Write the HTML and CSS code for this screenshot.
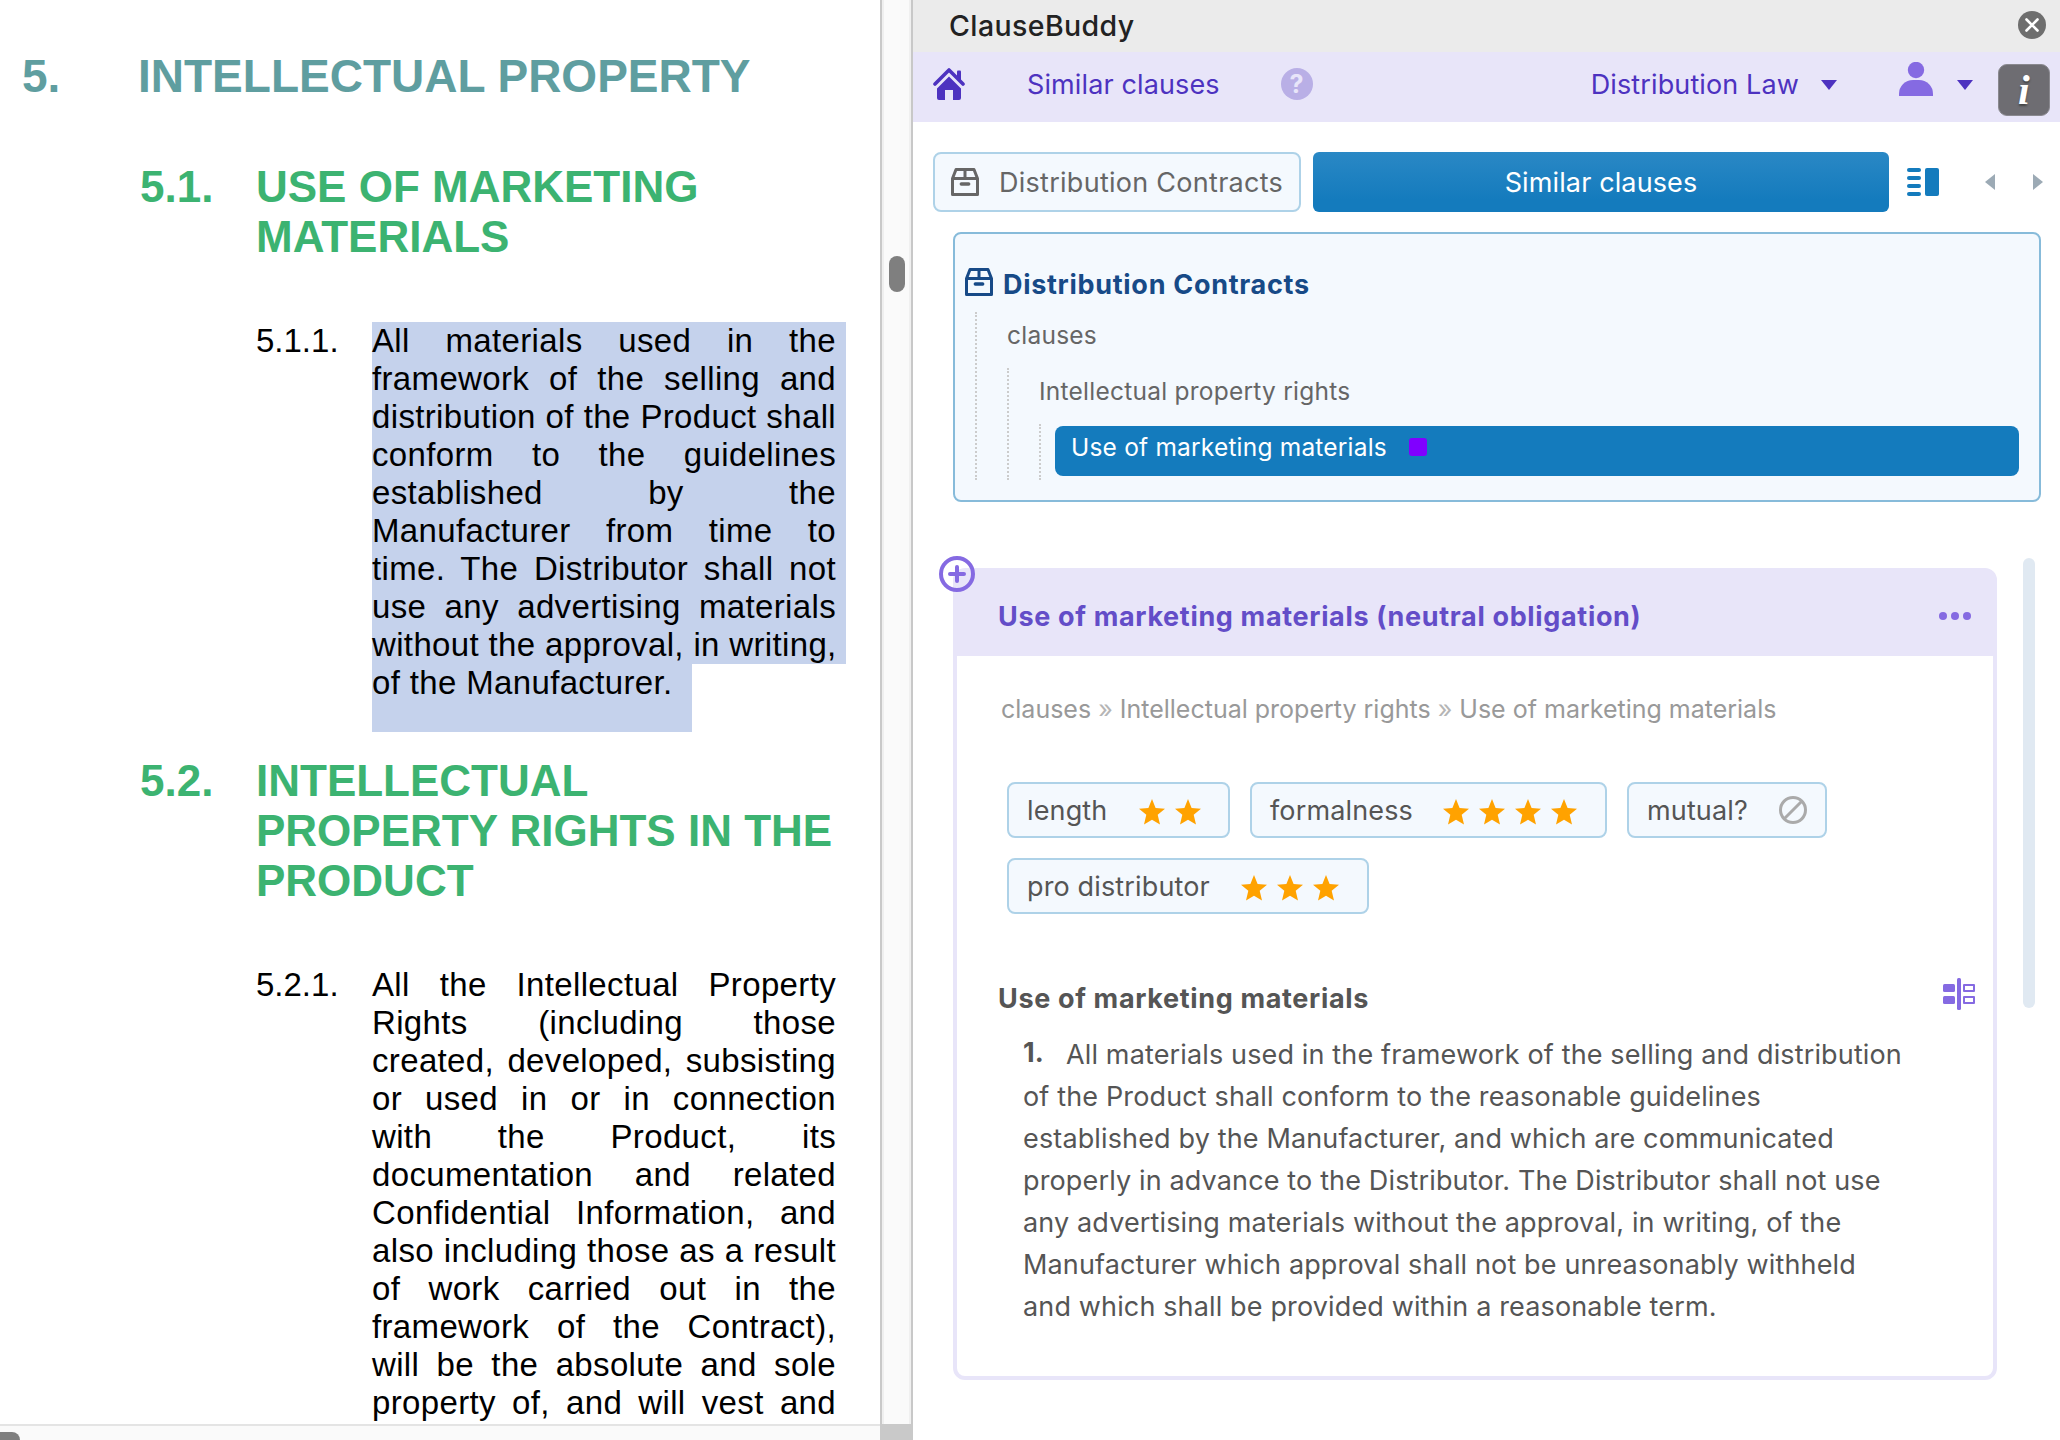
FILE: index.html
```html
<!DOCTYPE html>
<html lang="en">
<head>
    <meta charset="UTF-8">
    <title>ClauseBuddy</title>
    <link rel="stylesheet" href="styles.css">
</head>
<body>
    <!-- Document -->
    <div class="document">
        <div class="page">
            <h1 class="row title"><span class="num">5.</span><span>INTELLECTUAL PROPERTY</span></h1>

            <h2 class="row heading"><span class="num">5.1.</span><span>USE OF MARKETING<br>MATERIALS</span></h2>
            <div class="row clause">
                <span class="num">5.1.1.</span>
                <div class="clause-text">
                    <p class="selected">All materials used in the<br>framework of the selling and<br>distribution of the Product shall<br>conform to the guidelines<br>established by the<br>Manufacturer from time to<br>time. The Distributor shall not<br>use any advertising materials<br>without the approval, in writing,</p>
                    <p class="selected-end">of the Manufacturer.</p>
                </div>
            </div>

            <h2 class="row heading heading-second"><span class="num">5.2.</span><span>INTELLECTUAL<br>PROPERTY RIGHTS IN THE<br>PRODUCT</span></h2>
            <div class="row clause">
                <span class="num">5.2.1.</span>
                <div class="clause-text">
                    <p class="justified">All the Intellectual Property<br>Rights (including those<br>created, developed, subsisting<br>or used in or in connection<br>with the Product, its<br>documentation and related<br>Confidential Information, and<br>also including those as a result<br>of work carried out in the<br>framework of the Contract),<br>will be the absolute and sole<br>property of, and will vest and</p>
                </div>
            </div>
        </div>
        <div class="scroll-y"><div class="thumb"></div></div>
        <div class="scroll-x"><div class="thumb"></div></div>
        <div class="corner"></div>
    </div>

    <!-- Task pane -->
    <div class="pane">
        <div class="titlebar">
            <span class="app-name">ClauseBuddy</span>
            <svg width="28" height="28" viewBox="0 0 28 28"><circle cx="14" cy="14" r="14" fill="#6e6e6e"/><path d="M8.500 8.500l11 11M19.500 8.500l-11 11" stroke="#fff" stroke-width="2.600" stroke-linecap="round"/></svg>
        </div>

        <div class="navbar">
            <svg class="home" width="32" height="32" viewBox="0 0 32 32" fill="#4d32c0"><path d="M24 3.500a1 1 0 0 1 1-1h2a1 1 0 0 1 1 1V13l-4-4z"/><path d="M2 16L16 2l14 14" fill="none" stroke="#4d32c0" stroke-width="3.600" stroke-linecap="round" stroke-linejoin="round"/><path d="M16 8.500l12 12V30a2 2 0 0 1-2 2h-6V22h-8v10H6a2 2 0 0 1-2-2v-9.500z"/></svg>
            <span class="nav-title">Similar clauses</span>
            <span class="help">?</span>
            <span class="nav-library">Distribution Law</span>
            <svg class="caret-1" width="16" height="10" viewBox="0 0 16 10"><path d="M0 0h16L8 10z" fill="#4d32c0"/></svg>
            <svg class="user" width="34" height="34" viewBox="0 0 34 34" fill="#856ae2"><circle cx="17" cy="8" r="8.200"/><path d="M0 34v-2a14 14 0 0 1 14-14h6a14 14 0 0 1 14 14v2z"/></svg>
            <svg class="caret-2" width="16" height="10" viewBox="0 0 16 10"><path d="M0 0h16L8 10z" fill="#4d32c0"/></svg>
            <span class="info">i</span>
        </div>

        <div class="tabs">
            <div class="tab">
                <svg width="28" height="28" viewBox="0 0 28 28" fill="none" stroke="#666" stroke-width="3" stroke-linejoin="round"><path d="M1.500 10.500L5 1.500h18l3.500 9v16h-25zM1.500 10.500h25M14 1.500v9"/><path d="M10.300 16h7.400" stroke-width="3.400" stroke-linecap="round"/></svg>
                <span class="tab-label">Distribution Contracts</span>
            </div>
            <div class="tab tab-active"><span>Similar clauses</span></div>
            <svg class="compare" width="32" height="28" viewBox="0 0 32 28" fill="#147bbd"><rect width="14" height="4" rx="2"/><rect y="8" width="14" height="4" rx="2"/><rect y="16" width="14" height="4" rx="2"/><rect y="24" width="14" height="4" rx="2"/><rect x="18" width="14" height="28" rx="2"/></svg>
            <svg class="prev" width="10" height="16" viewBox="0 0 10 16"><path d="M10 0v16L0 8z" fill="#9caab5"/></svg>
            <svg class="next" width="10" height="16" viewBox="0 0 10 16"><path d="M0 0v16l10-8z" fill="#9caab5"/></svg>
        </div>

        <!-- Clause library tree -->
        <div class="tree">
            <div class="tree-title">
                <svg width="28" height="28" viewBox="0 0 28 28" fill="none" stroke="#174a87" stroke-width="3" stroke-linejoin="round"><path d="M1.500 10.500L5 1.500h18l3.500 9v16h-25zM1.500 10.500h25M14 1.500v9"/><path d="M10.300 16h7.400" stroke-width="3.400" stroke-linecap="round"/></svg>
                <span>Distribution Contracts</span>
            </div>
            <div class="branch branch-1">
                <div class="node">clauses</div>
                <div class="branch">
                    <div class="node">Intellectual property rights</div>
                    <div class="branch branch-last">
                        <div class="node-active"><span>Use of marketing materials</span><i class="marker"></i></div>
                    </div>
                </div>
            </div>
        </div>

        <div class="results">
            <div class="card">
                <svg class="add" width="36" height="36" viewBox="0 0 36 36" fill="none" stroke="#856ae2" stroke-width="4"><circle cx="18" cy="18" r="16"/><path d="M18 11v14M11 18h14" stroke-linecap="round"/></svg>
                <div class="card-header">
                    <span>Use of marketing materials (neutral obligation)</span>
                    <svg width="32" height="8" viewBox="0 0 32 8" fill="#856ae2"><circle cx="4" cy="4" r="4"/><circle cx="16" cy="4" r="4"/><circle cx="28" cy="4" r="4"/></svg>
                </div>
                <div class="card-body">
                    <div class="crumbs">clauses <i>»</i> Intellectual property rights <i>»</i> Use of marketing materials</div>
                    <div class="chips">
                        <div class="chip chip-length"><span>length</span><div class="stars"><svg><use href="#star"/></svg><svg><use href="#star"/></svg></div></div>
                        <div class="chip chip-formal"><span>formalness</span><div class="stars"><svg><use href="#star"/></svg><svg><use href="#star"/></svg><svg><use href="#star"/></svg><svg><use href="#star"/></svg></div></div>
                        <div class="chip chip-mutual"><span>mutual?</span><svg class="ban" width="28" height="28" viewBox="0 0 28 28" fill="none" stroke="#aaa" stroke-width="3"><circle cx="14" cy="14" r="12.500"/><path d="M5.500 22.500l17-17"/></svg></div>
                        <div class="chip chip-pro"><span>pro distributor</span><div class="stars"><svg><use href="#star"/></svg><svg><use href="#star"/></svg><svg><use href="#star"/></svg></div></div>
                    </div>
                    <div class="clause-head">
                        <span>Use of marketing materials</span>
                        <svg width="32" height="32" viewBox="0 0 32 32" fill="#856ae2"><rect y="6" width="12" height="8" rx="1.500"/><rect y="18" width="12" height="8" rx="1.500"/><rect x="14" width="4" height="32" rx="1.500"/><path d="M21 7h10v6H21zM21 19h10v6H21z" fill="none" stroke="#856ae2" stroke-width="2" stroke-linejoin="round"/></svg>
                    </div>
                    <p class="clause-body"><b>1.</b>All materials used in the framework of the selling and distribution<br>of the Product shall conform to the reasonable guidelines<br>established by the Manufacturer, and which are communicated<br>properly in advance to the Distributor. The Distributor shall not use<br>any advertising materials without the approval, in writing, of the<br>Manufacturer which approval shall not be unreasonably withheld<br>and which shall be provided within a reasonable term.</p>
                </div>
            </div>
            <div class="results-scroll"></div>
        </div>
    </div>

    <svg class="symbols" width="0" height="0"><symbol id="star" viewBox="0 0 26 26"><path d="M13 0l3.600 9 9.400.7-7.300 6.100 2.300 9.700L13 20.800 5 25.500l2.300-9.700L0 9.700 9.400 9z" fill="#ffa200"/></symbol></svg>
</body>
</html>
```
FILE: styles.css
```css
* {
    margin: 0;
    padding: 0;
    box-sizing: border-box;
}

body {
    display: flex;
    width: 2060px;
    height: 1440px;
    overflow: hidden;
    background: #fff;
    font-family: Inter, "Liberation Sans", sans-serif;
    color: #555;
}

svg {
    display: block;
    flex: none;
}

.symbols {
    position: absolute;
}

/* Document */
.document {
    display: grid;
    grid-template-columns: 880px 33px;
    grid-template-rows: 1424px 16px;
    width: 913px;
    flex: none;
    font-family: "Liberation Sans", Arial, sans-serif;
}

.page {
    overflow: hidden;
    padding-top: 50px;
    color: #000;
}

.row {
    display: flex;
    white-space: nowrap;
}

.row .num {
    flex: none;
    width: 116px;
}

.title {
    padding-left: 22px;
    font-size: 46px;
    line-height: 52px;
    color: #5f9ea0;
}

.heading {
    padding: 60px 0 60px 140px;
    font-size: 44px;
    line-height: 50px;
    color: #3cb371;
}

.heading-second {
    padding: 24px 0 60px 140px;
}

.clause {
    padding-left: 256px;
    font-size: 33px;
    line-height: 38px;
}

.clause-text {
    letter-spacing: 0.35px;
}

.selected,
.justified {
    width: 464px;
    text-align: justify;
    text-align-last: justify;
}

.selected {
    width: 474px;
    padding-right: 10px;
    background: #c5d2ec;
}

.selected-end {
    width: 320px;
    height: 68px;
    background: #c5d2ec;
}

.scroll-y {
    padding: 256px 0 0 7px;
    background: #fafafa;
    border-left: 2px solid #c9c9c9;
    border-right: 2px solid #c8c8c8;
    box-shadow: inset 2px 0 #efefef, inset -2px 0 #f0f0f0;
}

.scroll-y .thumb {
    width: 16px;
    height: 36px;
    border-radius: 8px;
    background: #7f7f7f;
}

.scroll-x {
    padding-top: 6px;
    background: #fafafa;
    border-top: 2px solid #e4e4e4;
}

.scroll-x .thumb {
    width: 20px;
    height: 8px;
    border-top-right-radius: 8px;
    background: #7f7f7f;
}

.corner {
    background: #c9c9c9;
}

/* Task pane */
.pane {
    width: 1147px;
    flex: none;
}

.titlebar {
    display: flex;
    justify-content: space-between;
    height: 52px;
    padding: 11px 14px 0 36px;
    background: #ebebeb;
}

.app-name {
    font-size: 28.5px;
    font-weight: 500;
    line-height: 30px;
    letter-spacing: 0.4px;
    color: #222;
}

.navbar {
    display: flex;
    align-items: center;
    height: 70px;
    padding: 0 10px 6px 20px;
    background: #e8e5f9;
    font-size: 27px;
    line-height: 34px;
    letter-spacing: 0.12px;
    color: #4d32c0;
    white-space: nowrap;
}

.nav-title {
    margin: 2px 0 0 62px;
}

.help {
    width: 32px;
    height: 32px;
    margin-left: 61px;
    border-radius: 50%;
    background: #b9afe6;
    color: #e8e5f9;
    font-size: 25px;
    font-weight: 700;
    line-height: 33px;
    text-align: center;
}

.nav-library {
    margin: 2px 0 0 auto;
}

.caret-1 {
    margin: 2px 0 0 22px;
}

.user {
    margin: -10px 24px 0 62px;
}

.caret-2 {
    margin-top: 2px;
}

.info {
    width: 52px;
    height: 52px;
    margin: 12px 0 0 25px;
    border-radius: 9px;
    background: #6e6d72;
    border: 1px solid #8a898f;
    color: #fff;
    font: italic 700 42px/50px "Liberation Serif", serif;
    text-align: center;
    text-shadow: 0 2px 2px #444;
}

.tabs {
    display: flex;
    align-items: center;
    padding: 30px 0 20px 20px;
}

.tab {
    display: flex;
    align-items: center;
    width: 368px;
    height: 60px;
    padding-left: 16px;
    border: 2px solid #aed2e8;
    border-radius: 8px;
    background: #f4f9fe;
    font-size: 27px;
    letter-spacing: 0.12px;
    color: #666;
    white-space: nowrap;
}

.tab-label {
    margin-left: 20px;
    letter-spacing: 0.27px;
}

.tab-active {
    justify-content: center;
    width: 576px;
    margin-left: 12px;
    padding: 0;
    border: 0;
    border-radius: 6px;
    background: linear-gradient(#2a88c5, #147bbd 80%);
    color: #fff;
}

.compare {
    margin-left: 18px;
}

.prev {
    margin: 0 38px 0 46px;
}

/* Tree */
.tree {
    width: 1088px;
    height: 270px;
    margin-left: 40px;
    padding: 34px 20px 0 10px;
    border: 2px solid #87bbda;
    border-radius: 8px;
    background: #f4f9fe;
    font-size: 24.5px;
    letter-spacing: 0.24px;
    color: #666;
}

.tree-title {
    display: flex;
    gap: 10px;
    height: 44px;
    font-size: 27px;
    font-weight: 700;
    line-height: 33px;
    letter-spacing: 0.7px;
    color: #174a87;
}

.branch {
    margin-left: 30px;
    border-left: 2px dotted #ccc;
}

.branch-1 {
    margin-left: 10px;
}

.branch-last {
    padding: 2px 0 4px 14px;
}

.node {
    height: 56px;
    padding-left: 30px;
    line-height: 47px;
}

.node-active {
    display: flex;
    height: 50px;
    padding-left: 16px;
    border-radius: 8px;
    background: #147bbd;
    color: #fff;
    line-height: 43px;
    letter-spacing: 0.2px;
}

.marker {
    width: 18px;
    height: 18px;
    margin: 12px 0 0 22px;
    border-radius: 3px;
    background: #8000ff;
}

/* Results */
.results {
    display: flex;
    padding: 56px 25px 0 40px;
}

.card {
    position: relative;
    width: 1044px;
    height: 812px;
    margin-top: 10px;
    border: 4px solid #e8e5f9;
    border-radius: 12px;
}

.add {
    position: absolute;
    left: -18px;
    top: -16px;
}

.card-header {
    display: flex;
    align-items: center;
    justify-content: space-between;
    height: 84px;
    padding: 5px 22px 0 41px;
    background: #e8e5f9;
    font-size: 27px;
    font-weight: 700;
    line-height: 34px;
    letter-spacing: 0.66px;
    color: #634dc8;
}

.card-header svg {
    margin-top: -1px;
}

.card-body {
    padding: 38px 18px 0 40px;
    font-size: 27px;
    letter-spacing: 0.14px;
}

.crumbs {
    padding-left: 4px;
    font-size: 25px;
    line-height: 31px;
    letter-spacing: 0;
    color: #999;
}

.crumbs i {
    font-style: normal;
    color: #b5b5b5;
}

.chips {
    display: flex;
    flex-wrap: wrap;
    gap: 20px;
    padding: 57px 0 0 10px;
}

.chip {
    display: flex;
    align-items: center;
    justify-content: space-between;
    height: 56px;
    padding: 0 28px 0 18px;
    border: 2px solid #aed2e8;
    border-radius: 8px;
    background: #f4f9fe;
    white-space: nowrap;
}

.chip-length {
    width: 223px;
    padding-right: 27px;
}

.chip-formal {
    width: 357px;
}

.chip-mutual {
    width: 200px;
    padding-right: 18px;
}

.chip-pro {
    width: 362px;
}

.stars {
    display: flex;
    gap: 10px;
}

.stars svg {
    width: 26px;
    height: 26px;
    margin-top: 3px;
}

.clause-head {
    display: flex;
    justify-content: space-between;
    padding: 64px 0 0 1px;
    font-weight: 700;
    line-height: 41px;
    letter-spacing: 0.65px;
}

.clause-body {
    margin: 15px 0 0 26px;
    line-height: 42px;
    white-space: nowrap;
}

.clause-body b {
    position: relative;
    top: -2px;
    display: inline-block;
    width: 43px;
}

.results-scroll {
    width: 12px;
    height: 450px;
    margin-left: 26px;
    border-radius: 6px;
    background: #e0e9f2;
}
```
